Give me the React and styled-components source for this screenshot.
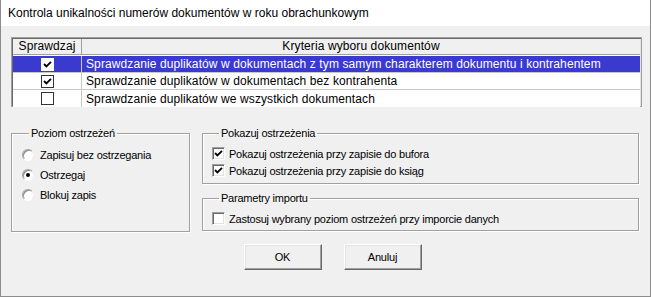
import React from "react";
import styled, { createGlobalStyle } from "styled-components";

const Global = createGlobalStyle`
  html, body { margin: 0; padding: 0; background: #f0f0f0; }
  * { box-sizing: border-box; }
`;

const Window = styled.div`
  width: 651px;
  height: 297px;
  border: 1px solid #8c8c8c;
  border-top: none;
  background: #f0f0f0;
  display: flex;
  flex-direction: column;
  font-family: "Liberation Sans", Arial, sans-serif;
  color: #000;
  overflow: hidden;
`;

const TitleBar = styled.div`
  height: 26px;
  flex: none;
  background: #fff;
  padding-left: 7px;
  font-size: 12px;
  line-height: 26px;
  white-space: nowrap;
`;

const Body = styled.div`
  display: flex;
  flex-direction: column;
  padding: 11px 8px 0 10px;
`;

const Grid = styled.div`
  display: grid;
  grid-template-columns: 69px 1fr;
  grid-auto-rows: 17px;
  height: 70px;
  border: 1px solid #a0a0a0;
  box-shadow: inset 1px 1px 0 #696969, inset -1px -1px 0 #e3e3e3;
  padding: 1px;
  background: #fff;
  font-size: 12px;
  letter-spacing: 0.1px;
`;

const HeadCell = styled.div`
  background: #f0f0f0;
  height: 16px;
  line-height: 15px;
  text-align: center;
  border-bottom: 1px solid #a0a0a0;
  border-right: ${(p) => (p.$last ? "none" : "1px solid #a0a0a0")};
  white-space: nowrap;
`;

const Cell = styled.div`
  height: 17px;
  line-height: 16px;
  background: ${(p) => (p.$sel ? "#3a3acf" : "#fff")};
  color: ${(p) => (p.$sel ? "#fff" : "#000")};
  border-bottom: ${(p) => (p.$lastRow ? "none" : "1px solid #c8c8c8")};
  border-right: ${(p) => (p.$check ? "1px solid #c8c8c8" : "none")};
  display: flex;
  align-items: center;
  justify-content: ${(p) => (p.$check ? "center" : "flex-start")};
  padding-left: ${(p) => (p.$check ? "0" : "4px")};
  white-space: nowrap;
`;

const TableBox = styled.span`
  width: 13px;
  height: 13px;
  border: 1px solid ${(p) => (p.$sel ? "#fff" : "#333")};
  background: #fff;
  display: flex;
  align-items: center;
  justify-content: center;
`;

const Lower = styled.div`
  display: flex;
  gap: 12px;
  margin-top: 20px;
  margin-right: 3px;
`;

const Group = styled.fieldset`
  margin: 0;
  min-width: 0;
  padding: 5px 0 0 ${(p) => p.$pl || 9}px;
  height: ${(p) => p.$h}px;
  width: ${(p) => (p.$w ? p.$w + "px" : "auto")};
  border: 1px solid #a0a0a0;
  box-shadow: inset 1px 1px 0 #fff, 1px 1px 0 #fff;
  font-size: 11px;
  letter-spacing: -0.22px;
`;

const Legend = styled.legend`
  margin-left: 7px;
  padding: 0 2px;
  line-height: 13px;
  font-size: 11px;
`;

const RightCol = styled.div`
  flex: 1;
  display: flex;
  flex-direction: column;
  gap: 8px;
`;

const OptRow = styled.div`
  height: ${(p) => p.$h}px;
  display: flex;
  align-items: center;
  gap: ${(p) => p.$gap}px;
  white-space: nowrap;
`;

const Sunken = styled.span`
  width: 13px;
  height: 13px;
  flex: none;
  background: #fff;
  border-top: 1px solid #a0a0a0;
  border-left: 1px solid #a0a0a0;
  border-right: 1px solid #fff;
  border-bottom: 1px solid #fff;
  box-shadow: inset 1px 1px 0 #696969, inset -1px -1px 0 #e3e3e3;
  display: flex;
  align-items: center;
  justify-content: center;
`;

const Radio = styled.span`
  width: 12px;
  height: 12px;
  flex: none;
  border-radius: 50%;
  background: #fff;
  border: 1px solid;
  border-color: #a0a0a0 #f0f0f0 #fff #a0a0a0;
  box-shadow: inset 1px 1px 0 #8a8a8a;
  display: flex;
  align-items: center;
  justify-content: center;
  &::after {
    content: "";
    width: 4px;
    height: 4px;
    border-radius: 50%;
    background: ${(p) => (p.$on ? "#000" : "transparent")};
  }
`;

const Buttons = styled.div`
  display: flex;
  justify-content: center;
  gap: 22px;
  margin-top: 12px;
  padding-left: 12px;
`;

const Button = styled.button`
  width: 78px;
  height: 26px;
  background: #f0f0f0;
  border: 1px solid;
  border-color: #fff #696969 #696969 #fff;
  box-shadow: inset -1px -1px 0 #a0a0a0, inset 1px 1px 0 #e3e3e3;
  font-family: "Liberation Sans", Arial, sans-serif;
  font-size: 11px;
  letter-spacing: -0.2px;
  color: #000;
  padding: 0;
`;

const Check = ({ color = "#000" }) => (
  <svg width="9" height="9" viewBox="0 0 9 9">
    <path d="M1 4 L3.4 6.4 L8 1.8" fill="none" stroke={color} strokeWidth="1.9" />
  </svg>
);

const rows = [
  { on: true, sel: true, text: "Sprawdzanie duplikatów w dokumentach z tym samym charakterem dokumentu i kontrahentem" },
  { on: true, sel: false, text: "Sprawdzanie duplikatów w dokumentach bez kontrahenta" },
  { on: false, sel: false, text: "Sprawdzanie duplikatów we wszystkich dokumentach" },
];

export default function App() {
  return (
    <>
      <Global />
      <Window>
        <TitleBar>Kontrola unikalności numerów dokumentów w roku obrachunkowym</TitleBar>
        <Body>
          <Grid>
            <HeadCell>Sprawdzaj</HeadCell>
            <HeadCell $last>Kryteria wyboru dokumentów</HeadCell>
            {rows.map((r, i) => (
              <React.Fragment key={i}>
                <Cell $check $sel={r.sel} $lastRow={i === rows.length - 1}>
                  <TableBox $sel={r.sel}>{r.on && <Check />}</TableBox>
                </Cell>
                <Cell $sel={r.sel} $lastRow={i === rows.length - 1}>{r.text}</Cell>
              </React.Fragment>
            ))}
          </Grid>
          <Lower>
            <Group $w={179} $h={105} $pl={10}>
              <Legend>Poziom ostrzeżeń</Legend>
              <OptRow $h={20} $gap={6}><Radio />Zapisuj bez ostrzegania</OptRow>
              <OptRow $h={20} $gap={6}><Radio $on />Ostrzegaj</OptRow>
              <OptRow $h={20} $gap={6}><Radio />Blokuj zapis</OptRow>
            </Group>
            <RightCol>
              <Group $h={57}>
                <Legend>Pokazuj ostrzeżenia</Legend>
                <OptRow $h={17} $gap={4}><Sunken><Check /></Sunken>Pokazuj ostrzeżenia przy zapisie do bufora</OptRow>
                <OptRow $h={17} $gap={4}><Sunken><Check /></Sunken>Pokazuj ostrzeżenia przy zapisie do ksiąg</OptRow>
              </Group>
              <Group $h={39}>
                <Legend>Parametry importu</Legend>
                <OptRow $h={17} $gap={4}><Sunken />Zastosuj wybrany poziom ostrzeżeń przy imporcie danych</OptRow>
              </Group>
            </RightCol>
          </Lower>
          <Buttons>
            <Button>OK</Button>
            <Button>Anuluj</Button>
          </Buttons>
        </Body>
      </Window>
    </>
  );
}
